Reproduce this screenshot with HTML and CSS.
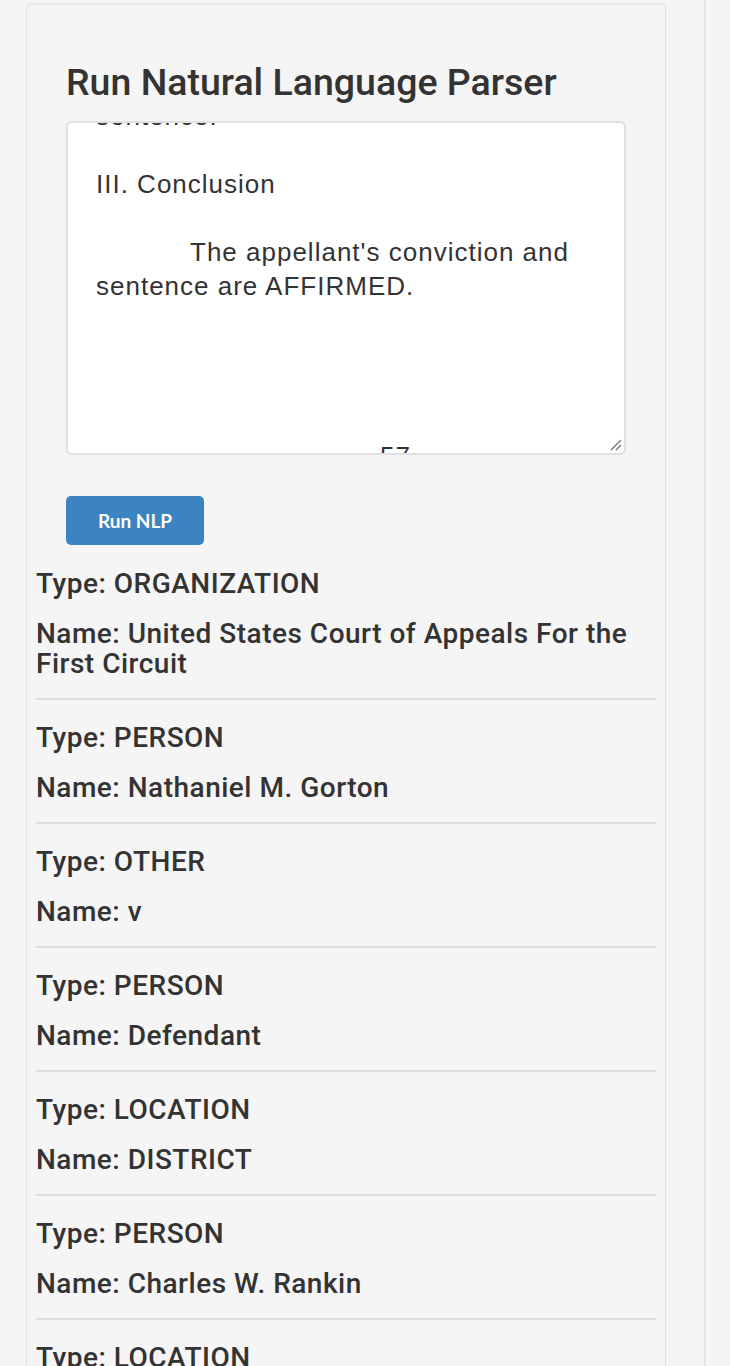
FILE: index.html
```html
<!DOCTYPE html>
<html lang="en">
<head>
<meta charset="utf-8">
<title>Run Natural Language Parser</title>
<link rel="stylesheet" href="styles.css">
</head>
<body>
<div class="page">
  <div class="well main">
    <div class="parser">
      <h3 class="title">Run Natural Language Parser</h3>
      <div class="textarea">
        <div class="ta-content">
          <div class="ln">sentence.</div>
          <div class="ln"></div>
          <div class="ln">III. Conclusion</div>
          <div class="ln"></div>
          <div class="ln indent">The appellant's conviction and</div>
          <div class="ln">sentence are AFFIRMED.</div>
          <div class="ln"></div>
          <div class="ln"></div>
          <div class="ln"></div>
          <div class="ln"></div>
          <div class="ln page-no">57</div>
          <div class="ln"></div>
        </div>
        <svg class="grip" width="14" height="14" viewBox="0 0 14 14" aria-hidden="true">
          <line x1="13" y1="3" x2="3" y2="13" stroke="#7a7a7a" stroke-width="1.4"/>
          <line x1="13" y1="8" x2="8" y2="13" stroke="#7a7a7a" stroke-width="1.4"/>
        </svg>
      </div>
      <button class="btn">Run NLP</button>
    </div>
    <ul class="entities">
      <li class="entity"><p class="type">Type: ORGANIZATION</p><p class="name">Name: United States Court of Appeals For the First Circuit</p></li>
      <li class="entity"><p class="type">Type: PERSON</p><p class="name">Name: Nathaniel M. Gorton</p></li>
      <li class="entity"><p class="type">Type: OTHER</p><p class="name">Name: v</p></li>
      <li class="entity"><p class="type">Type: PERSON</p><p class="name">Name: Defendant</p></li>
      <li class="entity"><p class="type">Type: LOCATION</p><p class="name">Name: DISTRICT</p></li>
      <li class="entity"><p class="type">Type: PERSON</p><p class="name">Name: Charles W. Rankin</p></li>
      <li class="entity"><p class="type">Type: LOCATION</p><p class="name">Name: Massachusetts</p></li>
      <li class="entity"><p class="type">Type: PERSON</p><p class="name">Name: Appellant</p></li>
    </ul>
  </div>
  <div class="side"></div>
</div>
</body>
</html>
```
FILE: styles.css
```css
html, body {
  margin: 0;
  padding: 0;
}
body {
  background: #f5f5f5;
  color: #333;
  font-family: "Liberation Sans", Arial, sans-serif;
}
.page {
  display: flex;
  align-items: stretch;
  padding-left: 26px;
  padding-top: 3px;
  min-height: 1366px;
  box-sizing: border-box;
}
.well {
  background: #f5f5f5;
  border: 1px solid #e3e3e3;
  border-radius: 6px;
  box-shadow: inset 0 1px 1px rgba(0,0,0,0.05);
}
.main {
  width: 640px;
  box-sizing: border-box;
  padding: 9px 9px 0;
  flex: none;
}
.side {
  margin-left: 38px;
  flex: 1;
  border-left: 2px solid #e4e4e4;
  margin-top: -3px;
}
.parser {
  padding: 0 30px;
}
.title {
  margin: 49px 0 19px;
  font-family: Roboto, "Liberation Sans", sans-serif;
  font-weight: 500;
  font-size: 37.5px;
  line-height: 40px;
  color: #333;
}
.textarea {
  position: relative;
  height: 334px;
  box-sizing: border-box;
  background: #fff;
  border: 2px solid #e0e0e0;
  border-radius: 6px;
  overflow: hidden;
}
.ta-content {
  margin-top: -24px;
  padding-left: 28px;
  font-size: 26px;
  letter-spacing: 1px;
  line-height: 34px;
  color: #333;
}
.ln {
  height: 34px;
  white-space: nowrap;
}
.indent {
  padding-left: 94px;
}
.page-no {
  padding-left: 284px;
}
.grip {
  position: absolute;
  right: 2px;
  bottom: 2px;
}
.btn {
  display: block;
  margin: 41px 0 1px;
  width: 138px;
  height: 49px;
  padding: 0;
  border: none;
  border-radius: 5px;
  background: #3b83c1;
  color: #fff;
  font-family: Lato, sans-serif;
  font-weight: 700;
  font-size: 19px;
  text-align: center;
}
.entities {
  list-style: none;
  margin: 0;
  padding: 0;
}
.entity {
  padding: 23px 0 19px;
  border-bottom: 2px solid #ddd;
}
.entity p {
  margin: 0;
  font-family: Roboto, "Liberation Sans", sans-serif;
  font-weight: 500;
  font-size: 28px;
  letter-spacing: 0.5px;
  line-height: 30px;
  color: #333;
}
.entity .name {
  margin-top: 20px;
}
```
